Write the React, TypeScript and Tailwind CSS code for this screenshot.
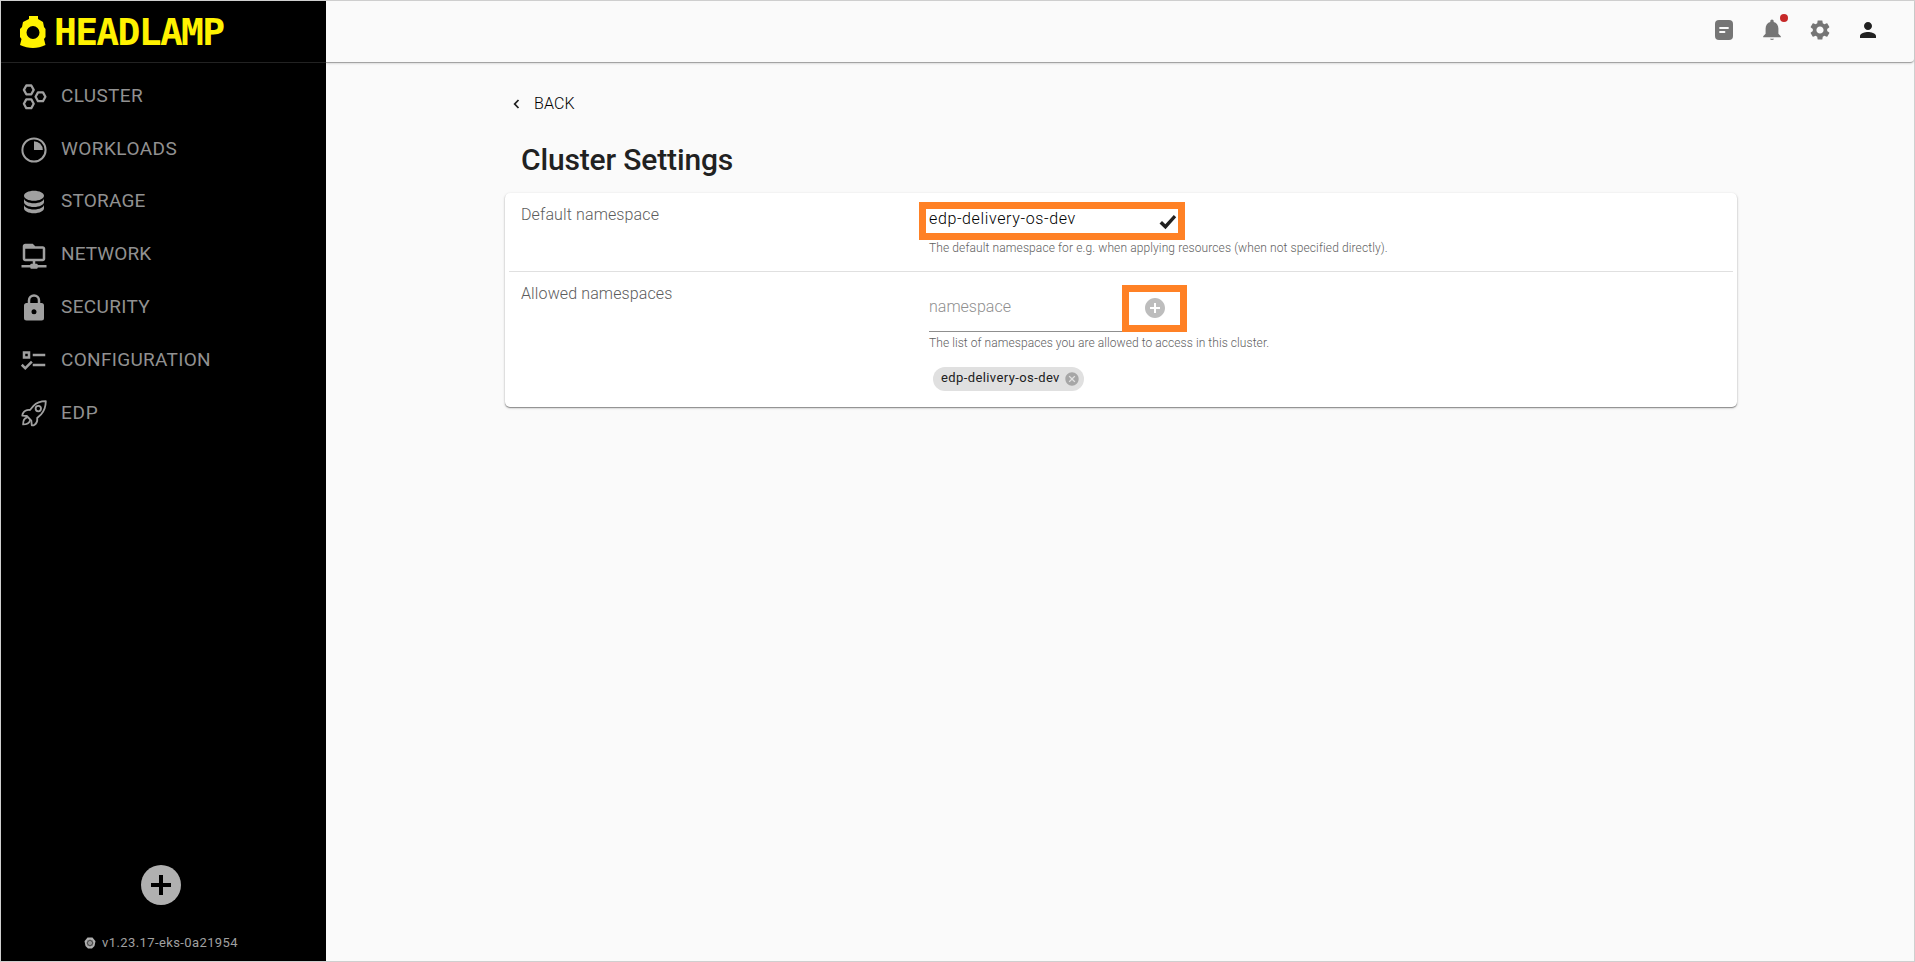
import React from "react";

type IconProps = { d: string; className?: string };

function Icon({ d, className = "size-[30px]" }: IconProps) {
  return (
    <svg viewBox="0 0 24 24" className={className} fill="currentColor" fillRule="evenodd" aria-hidden="true">
      <path d={d} />
    </svg>
  );
}

const ICONS = {
  database:
    "M12,3C7.58,3 4,4.79 4,7C4,9.21 7.58,11 12,11C16.42,11 20,9.21 20,7C20,4.79 16.42,3 12,3M4,9V12C4,14.21 7.58,16 12,16C16.42,16 20,14.21 20,12V9C20,11.21 16.42,13 12,13C7.58,13 4,11.21 4,9M4,14V17C4,19.21 7.58,21 12,21C16.42,21 20,19.21 20,17V14C20,16.21 16.42,18 12,18C7.58,18 4,16.21 4,14Z",
  folderNetwork:
    "M15 20C15 19.45 14.55 19 14 19H13V17H19C20.11 17 21 16.11 21 15V7C21 5.9 20.11 5 19 5H13L11 3H5C3.9 3 3 3.9 3 5V15C3 16.11 3.9 17 5 17H11V19H10C9.45 19 9 19.45 9 20H2V22H9C9 22.55 9.45 23 10 23H14C14.55 23 15 22.55 15 22H22V20H15M5 15V7H19V15H5Z",
  lock: "M12,17A2,2 0 0,0 14,15C14,13.89 13.1,13 12,13A2,2 0 0,0 10,15A2,2 0 0,0 12,17M18,8A2,2 0 0,1 20,10V20A2,2 0 0,1 18,22H6A2,2 0 0,1 4,20V10C4,8.89 4.9,8 6,8H7V6A5,5 0 0,1 12,1A5,5 0 0,1 17,6V8H18M12,3A3,3 0 0,0 9,6V8H15V6A3,3 0 0,0 12,3Z",
  listChecks:
    "M3,5H9V11H3V5M5,7V9H7V7H5M11,7H21V9H11V7M11,15H21V17H11V15M5,20L1.5,16.5L2.91,15.09L5,17.17L9.59,12.59L11,14L5,20Z",
  bell: "M12 22c1.1 0 2-.6 2-1.2h-4c0 .6.89 1.2 2 1.2zm6.4-6.2v-5.3c0-3.2-1.9-5.8-4.7-6.5v-.8c0-.9-.8-1.7-1.7-1.7s-1.7.8-1.7 1.7v.8C7.5 4.7 5.6 7.3 5.6 10.500v5.300L3.200 18.200V19.200h17.600v-1l-2.400-2.400z",
  gear: "M19.14 12.94c.04-.3.06-.61.06-.94 0-.32-.02-.64-.07-.94l2.03-1.58c.18-.14.23-.41.12-.61l-1.92-3.32c-.12-.22-.37-.29-.59-.22l-2.39.96c-.5-.38-1.03-.7-1.62-.94l-.36-2.54c-.04-.24-.24-.41-.48-.41h-3.84c-.24 0-.43.17-.47.41l-.36 2.54c-.59.24-1.13.57-1.62.94l-2.39-.96c-.22-.08-.47 0-.59.22L2.74 8.87c-.12.21-.08.47.12.61l2.03 1.58c-.05.3-.09.63-.09.94s.02.64.07.94l-2.03 1.58c-.18.14-.23.41-.12.61l1.92 3.32c.12.22.37.29.59.22l2.39-.96c.5.38 1.03.7 1.62.94l.36 2.54c.05.24.24.41.48.41h3.84c.24 0 .44-.17.47-.41l.36-2.54c.59-.24 1.13-.56 1.62-.94l2.39.96c.22.08.47 0 .59-.22l1.92-3.32c.12-.22.07-.47-.12-.61l-2.01-1.58zM12 15.6c-1.98 0-3.6-1.62-3.6-3.6s1.62-3.6 3.6-3.6 3.6 1.62 3.6 3.6-1.62 3.6-3.6 3.6z",
  person: "M12 12c2.21 0 4-1.79 4-4s-1.79-4-4-4-4 1.79-4 4 1.79 4 4 4zm0 2c-2.67 0-8 1.34-8 4v2h16v-2c0-2.66-5.33-4-8-4z",
  plusCircle: "M12 2C6.48 2 2 6.48 2 12s4.48 10 10 10 10-4.48 10-10S17.52 2 12 2zm5 11h-4v4h-2v-4H7v-2h4V7h2v4h4v2z",
  cancel:
    "M12 2C6.47 2 2 6.47 2 12s4.47 10 10 10 10-4.47 10-10S17.53 2 12 2zm5 13.59L15.59 17 12 13.41 8.41 17 7 15.59 10.59 12 7 8.41 8.41 7 12 10.59 15.59 7 17 8.41 13.41 12 17 15.59z",
};

function ClusterIcon() {
  return (
    <svg viewBox="0 0 30 30" className="mt-[2px] size-[30px]" fill="none" stroke="currentColor" strokeWidth="2.3" strokeLinejoin="round">
      <path d="M7.300 3.500h5l2.400 4.400-2.400 4.400h-5L4.900 7.900zM7.300 17.400h5l2.400 4.400-2.400 4.400h-5l-2.400-4.400zM19 10.400h5l2.400 4.400-2.400 4.400h-5l-2.400-4.400z" />
    </svg>
  );
}

function SliceIcon() {
  return (
    <svg viewBox="0 0 30 30" className="mt-[2px] size-[30px]">
      <circle cx="15" cy="15" r="11.6" fill="none" stroke="currentColor" strokeWidth="2" />
      <path d="M15 15V6.200a8.800 8.800 0 0 1 8.800 8.800z" fill="currentColor" />
    </svg>
  );
}

function RocketIcon() {
  return (
    <svg viewBox="0 0 30 30" className="size-[30px]" fill="none" stroke="currentColor" strokeWidth="1.8" strokeLinejoin="round" strokeLinecap="round">
      <path d="M26.800 3.200c-5.200.1-9.300 1.500-12.300 4.700L11 12c-3-.3-5.600.8-7.300 3.700l-.4 1.900 4.500.4 4.500 4.600.5 4.700 2 0c3-1.800 3.800-4.300 3.400-7.300l3.900-3.700c3-3.200 4.600-7.500 4.700-13.100z" />
      <circle cx="19.3" cy="10.6" r="2.7" />
      <path d="M7.600 19.700c-2.400.7-3.500 2.600-3.500 6.700 4-.1 6-1.200 6.700-3.500" />
    </svg>
  );
}

function LampMark() {
  return (
    <svg viewBox="0 0 26 32" className="h-8 w-[26px]">
      <path
        fill="#fff200"
        fillRule="evenodd"
        d="M9 0h9v3l5 3 1 5 1.500 2v8l-1.500 2 1.500 6c-8 4-17 4-25.500 0l1.500-6-1.500-2v-8L2 11l1-5 6-3zM13 10a6.500 6.500 0 1 0 0 13 6.500 6.500 0 0 0 0-13z"
      />
    </svg>
  );
}

function HelmIcon() {
  return (
    <svg viewBox="0 0 24 24" className="size-3" fill="none">
      <path d="M7 1h10l6 7.500L21 18l-5 5H8l-5-5L1 8.500z" fill="#b0b0b0" />
      <circle cx="12" cy="12" r="5.5" stroke="#333" strokeWidth="1.5" />
      <path d="M12 5v14M5 12h14M7 7l10 10M17 7L7 17" stroke="#333" strokeWidth="1" />
      <circle cx="12" cy="12" r="2" fill="#aaa" />
    </svg>
  );
}

const NAV = [
  { label: "CLUSTER", icon: <ClusterIcon />, track: "tracking-[0.35px]" },
  { label: "WORKLOADS", icon: <SliceIcon />, track: "tracking-[0.45px]" },
  { label: "STORAGE", icon: <Icon d={ICONS.database} />, track: "tracking-[0.2px]" },
  { label: "NETWORK", icon: <Icon d={ICONS.folderNetwork} />, track: "tracking-[0.1px]" },
  { label: "SECURITY", icon: <Icon d={ICONS.lock} />, track: "tracking-[0.35px]" },
  { label: "CONFIGURATION", icon: <Icon d={ICONS.listChecks} />, track: "tracking-[0.3px]" },
  { label: "EDP", icon: <RocketIcon />, track: "tracking-[0.7px]" },
];

function Sidebar() {
  return (
    <aside className="flex w-[325px] shrink-0 flex-col bg-black text-[#a0a0a0]">
      <div className="flex h-[62px] shrink-0 items-center gap-[8px] border-b border-[#222] pl-[19px]">
        <LampMark />
        <span className="font-['DejaVu_Sans_Mono'] text-[38px] leading-none font-bold tracking-[-1.7px] text-[#fff200]">HEADLAMP</span>
      </div>
      <nav className="flex flex-col pt-[7px]">
        {NAV.map((item) => (
          <a key={item.label} className="flex h-[52.8px] items-center gap-3 pl-[18px]">
            {item.icon}
            <span className={`-mt-[1px] text-[19px] leading-6 font-normal text-[#919191] ${item.track}`}>{item.label}</span>
          </a>
        ))}
      </nav>
      <div className="mt-auto flex flex-col items-center pr-[5px] pb-[8px]">
        <button className="flex size-10 items-center justify-center rounded-full bg-[#b0b0b0] text-black">
          <svg viewBox="0 0 20 20" className="size-5" fill="currentColor">
            <path d="M8 0h4v8h8v4h-8v8H8v-8H0V8h8z" />
          </svg>
        </button>
        <div className="mt-[28px] flex items-center gap-[6px] text-[13px] leading-5">
          <HelmIcon />
          <span className="tracking-[0.4px]">v1.23.17-eks-0a21954</span>
        </div>
      </div>
    </aside>
  );
}

function TopBar() {
  return (
    <header className="flex h-[62px] shrink-0 items-center justify-end gap-6 rounded-br border-b border-[#a3a3a3] pr-[34px] pb-1 text-[#757575] shadow-[0_1px_2px_rgba(0,0,0,0.12)]">
      <svg viewBox="0 0 24 24" className="size-6">
        <rect x="3" y="2" width="18" height="20" rx="4" fill="currentColor" />
        <path d="M8 10h8M8 14h4.500" stroke="#fafafa" strokeWidth="1.8" strokeLinecap="round" />
      </svg>
      <div className="relative">
        <Icon d={ICONS.bell} className="size-6" />
        <span className="absolute -top-[4px] -right-[4px] size-2 rounded-full bg-[#c62828]" />
      </div>
      <Icon d={ICONS.gear} className="size-6" />
      <Icon d={ICONS.person} className="size-6 text-[#212121]" />
    </header>
  );
}

function SettingsCard() {
  return (
    <section className="flex h-[214px] w-[1232px] flex-col rounded-[5px] bg-white px-1 shadow-[0_1px_1px_#8c8c8c,0_1px_3px_rgba(0,0,0,0.2)]">
      <div className="flex h-[79px] border-b border-[#e0e0e0] pl-[12px]">
        <div className="w-[408px] pt-[10px] text-[16px] leading-6 font-light tracking-[0.12px] text-[#5c5c5c]">Default namespace</div>
        <div className="relative pt-[14px]">
          <div className="flex h-7 w-[248px] items-center justify-between text-[#212121]">
            <span className="pb-[4px] text-[16px] font-light tracking-[0.62px] text-black">edp-delivery-os-dev</span>
            <svg viewBox="0 0 18 16" className="mt-[2px] h-4 w-[18px]" fill="currentColor">
              <path d="M0.500 9.500l2.500-2.500 3.300 3.200L14.800 1l2.400 2.300L6.500 15.300z" />
            </svg>
          </div>
          <p className="mt-[5px] text-[12px] leading-4 font-light tracking-[0.11px] whitespace-nowrap text-[#616161]">
            The default namespace for e.g. when applying resources (when not specified directly).
          </p>
          <div className="absolute top-[9px] -left-[10px] h-[38px] w-[266px] border-[7px] border-[#ff8125]" />
        </div>
      </div>
      <div className="flex pl-[12px]">
        <div className="w-[408px] pt-[10px] text-[16px] leading-6 font-light tracking-[0.12px] text-[#5c5c5c]">Allowed namespaces</div>
        <div className="relative pt-[14px]">
          <div className="flex h-[46px] w-[240px] items-center justify-between border-b border-[#8f8f8f] pr-[2px]">
            <span className="pb-[3px] text-[16px] font-light tracking-[0px] text-[#8f8f8f]">namespace</span>
            <Icon d={ICONS.plusCircle} className="mb-[2px] size-6 text-[#bdbdbd]" />
          </div>
          <p className="mt-[3px] text-[12px] leading-4 font-light tracking-[0.07px] whitespace-nowrap text-[#616161]">
            The list of namespaces you are allowed to access in this cluster.
          </p>
          <span className="mt-4 ml-1 flex h-6 w-[151px] items-center justify-between rounded-full bg-[#e0e0e0] pr-1 pl-2 text-[13px] text-[#212121]">
            <span className="pb-[2px] tracking-[0.4px] whitespace-nowrap">edp-delivery-os-dev</span>
            <Icon d={ICONS.cancel} className="size-4 shrink-0 text-[#a6a6a6]" />
          </span>
          <div className="absolute top-[13px] left-[193px] h-[47px] w-[65px] border-[7px] border-[#ff8125]" />
        </div>
      </div>
    </section>
  );
}

export default function App() {
  return (
    <div className="flex h-[962px] w-[1915px] border border-[#cfcfcf] bg-[#fafafa] font-['Roboto',sans-serif]">
      <Sidebar />
      <div className="flex min-w-0 flex-1 flex-col">
        <TopBar />
        <main className="flex flex-col pt-[29px] pl-[179px]">
          <button className="ml-[8px] flex items-center gap-[14px] self-start text-[#212121]">
            <svg viewBox="0 0 7 10" className="h-[10px] w-[7px]" fill="none" stroke="currentColor" strokeWidth="1.8">
              <path d="M5.500 1L1.700 5l3.800 4" />
            </svg>
            <span className="text-[16px] leading-6 font-light tracking-[0.1px] text-black">BACK</span>
          </button>
          <h1 className="mt-[26px] mb-[15px] ml-[16px] text-[30px] leading-9 font-medium tracking-[-0.15px] text-[#212121]">Cluster Settings</h1>
          <SettingsCard />
        </main>
      </div>
    </div>
  );
}
